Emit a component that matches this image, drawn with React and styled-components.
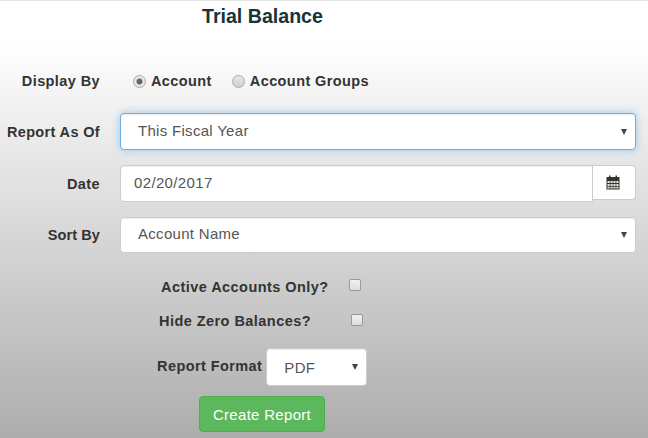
import React from "react";
import styled, { createGlobalStyle } from "styled-components";

const GlobalStyle = createGlobalStyle`
  html, body {
    margin: 0;
    padding: 0;
    height: 100%;
    overflow: hidden;
  }
  body {
    font-family: "Liberation Sans", Arial, sans-serif;
    color: #333;
  }
`;

const Page = styled.form`
  width: 648px;
  height: 438px;
  box-sizing: border-box;
  border-top: 1px solid #e4e4e4;
  background: linear-gradient(to bottom, #fff 0, #fff 40px, #adadad 100%);
  display: flex;
  flex-direction: column;
  overflow: hidden;
`;

const Title = styled.h1`
  margin: 0;
  padding: 4px 0 0 202px;
  height: 34px;
  box-sizing: border-box;
  font-size: 19.6px;
  line-height: 22px;
  font-weight: bold;
  color: #17333b;
`;

const Row = styled.div`
  display: grid;
  grid-template-columns: 100px 1fr;
  column-gap: 20px;
  align-items: center;
  margin-top: ${(p) => p.$top || 0}px;
  width: 636px;
`;

const Label = styled.label`
  font-size: 14.5px;
  font-weight: bold;
  letter-spacing: ${(p) => p.$spacing ?? 0.4}px;
  color: #333;
  text-align: right;
  white-space: nowrap;
`;

const Radios = styled.div`
  display: flex;
  align-items: center;
  height: 20px;
  padding-left: 13px;
`;

const RadioLabel = styled.label`
  display: flex;
  align-items: center;
  font-size: 14.5px;
  font-weight: bold;
  letter-spacing: 0.4px;
  margin-right: 20px;
`;

const Radio = styled.span`
  width: 13px;
  height: 13px;
  box-sizing: border-box;
  border-radius: 50%;
  border: 1px solid #a9a9a9;
  background: ${(p) =>
    p.$checked
      ? "radial-gradient(circle, #666 0, #666 2.6px, #e8e8e8 3.4px)"
      : "linear-gradient(#e6e6e6, #d0d0d0)"};
  margin-right: 5px;
`;

const SelectWrap = styled.div`
  position: relative;
  width: ${(p) => p.$width || "100%"};
`;

const Select = styled.select`
  appearance: none;
  display: block;
  width: 100%;
  height: ${(p) => p.$height || 36}px;
  box-sizing: border-box;
  padding: 0 ${(p) => p.$inset ?? 17}px ${(p) => p.$lift ?? 2}px;
  font: 15px "Liberation Sans", Arial, sans-serif;
  letter-spacing: 0.3px;
  color: #555;
  background: #fff;
  border: 1px solid ${(p) => (p.$focused ? "#66afe9" : "#ccc")};
  border-radius: 4px;
  box-shadow: ${(p) =>
    p.$focused
      ? "inset 0 1px 1px rgba(0,0,0,.075), 0 0 8px rgba(102,175,233,.6)"
      : "inset 0 1px 1px rgba(0,0,0,.075)"};
  outline: none;
`;

const Caret = styled.span`
  position: absolute;
  right: 9px;
  top: 50%;
  margin-top: -3px;
  width: 0;
  height: 0;
  border-left: 3px solid transparent;
  border-right: 3px solid transparent;
  border-top: 6px solid #444;
`;

const InputGroup = styled.div`
  display: flex;
  height: 37px;
`;

const DateInput = styled.input`
  flex: 1;
  min-width: 0;
  box-sizing: border-box;
  padding: 0 13px 2px;
  font: 15px "Liberation Sans", Arial, sans-serif;
  letter-spacing: 0.35px;
  color: #555;
  background: #fff;
  border: 1px solid #ccc;
  border-radius: 4px 0 0 4px;
  box-shadow: inset 0 1px 1px rgba(0, 0, 0, 0.075);
  outline: none;
`;

const Addon = styled.span`
  width: 43px;
  height: 35px;
  box-sizing: border-box;
  display: flex;
  align-items: center;
  justify-content: center;
  padding-right: 2px;
  background: #fff;
  border: 1px solid #ccc;
  border-left: 0;
  border-radius: 0 4px 4px 0;
`;

const CheckRow = styled.div`
  display: flex;
  align-items: center;
  height: 20px;
  margin-top: ${(p) => p.$top}px;
  padding-left: ${(p) => p.$left}px;
`;

const CheckText = styled.label`
  font-size: 14.5px;
  font-weight: bold;
  letter-spacing: 0.45px;
  margin-top: ${(p) => p.$drop ?? 2}px;
  margin-right: ${(p) => p.$gap}px;
`;

const Checkbox = styled.span`
  width: 12px;
  height: 12px;
  box-sizing: border-box;
  border: 1px solid #999;
  border-radius: 2px;
  background: linear-gradient(#f0f0f0, #dedede);
  margin-top: -3px;
`;

const FormatRow = styled.div`
  display: flex;
  align-items: center;
  margin-top: 17px;
  padding-left: 157px;
`;

const FormatLabel = styled.label`
  font-size: 14.5px;
  font-weight: bold;
  letter-spacing: 0.42px;
  margin-right: 4px;
  margin-bottom: 2px;
`;

const Actions = styled.div`
  margin-top: 10px;
  padding-left: 199px;
`;

const Button = styled.button`
  width: 126px;
  height: 36px;
  font: 15px "Liberation Sans", Arial, sans-serif;
  letter-spacing: 0.3px;
  color: #fff;
  background: #5cb85c;
  border: 1px solid #4cae4c;
  border-radius: 4px;
`;

const CalendarIcon = () => (
  <svg width="14" height="15" viewBox="0 0 14 15">
    <rect x="0.5" y="2" width="13" height="12.5" fill="#333" />
    <rect x="3" y="0.5" width="1.5" height="3" fill="#333" />
    <rect x="9.5" y="0.5" width="1.5" height="3" fill="#333" />
    <path
      d="M1.5 6h2.2v2H1.5zM4.5 6h2.2v2H4.5zM7.4 6h2.2v2H7.4zM10.3 6h2.2v2h-2.2zM1.5 9h2.2v2H1.5zM4.5 9h2.2v2H4.5zM7.4 9h2.2v2H7.4zM10.3 9h2.2v2h-2.2zM1.5 11.8h2.2v1.8H1.5zM4.5 11.8h2.2v1.8H4.5zM7.4 11.8h2.2v1.8H7.4zM10.3 11.8h2.2v1.8h-2.2z"
      fill="#e8e4d8"
    />
  </svg>
);

export default function App() {
  return (
    <Page onSubmit={(e) => e.preventDefault()}>
      <GlobalStyle />
      <Title>Trial Balance</Title>
      <Row $top={36}>
        <Label>Display By</Label>
        <Radios>
          <RadioLabel>
            <Radio $checked />
            Account
          </RadioLabel>
          <RadioLabel>
            <Radio />
            Account Groups
          </RadioLabel>
        </Radios>
      </Row>
      <Row $top={22}>
        <Label $spacing={0.35}>Report As Of</Label>
        <SelectWrap>
          <Select $focused $height={37} defaultValue="This Fiscal Year">
            <option>This Fiscal Year</option>
          </Select>
          <Caret />
        </SelectWrap>
      </Row>
      <Row $top={15}>
        <Label>Date</Label>
        <InputGroup>
          <DateInput defaultValue="02/20/2017" />
          <Addon>
            <CalendarIcon />
          </Addon>
        </InputGroup>
      </Row>
      <Row $top={15}>
        <Label $spacing={0.1}>Sort By</Label>
        <SelectWrap>
          <Select $lift={4} defaultValue="Account Name">
            <option>Account Name</option>
          </Select>
          <Caret />
        </SelectWrap>
      </Row>
      <CheckRow $top={23} $left={161}>
        <CheckText $gap={20}>Active Accounts Only?</CheckText>
        <Checkbox />
      </CheckRow>
      <CheckRow $top={15} $left={159}>
        <CheckText $gap={40} $drop={0}>Hide Zero Balances?</CheckText>
        <Checkbox />
      </CheckRow>
      <FormatRow>
        <FormatLabel>Report Format</FormatLabel>
        <SelectWrap $width="101px">
          <Select $height={38} $inset={17} $lift={0} defaultValue="PDF">
            <option>PDF</option>
          </Select>
          <Caret />
        </SelectWrap>
      </FormatRow>
      <Actions>
        <Button type="button">Create Report</Button>
      </Actions>
    </Page>
  );
}
